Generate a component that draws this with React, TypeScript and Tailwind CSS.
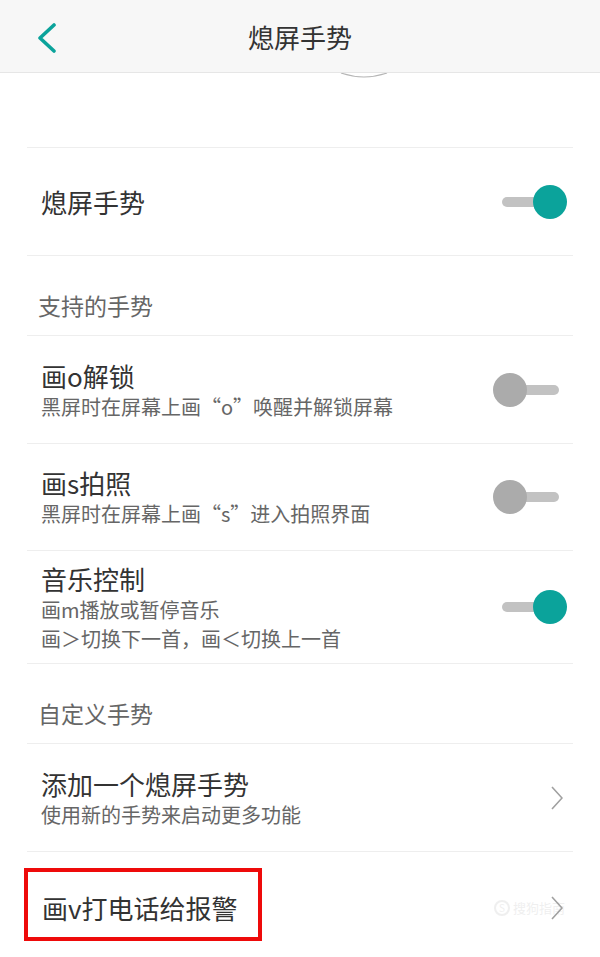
import React from 'react';

const font = { fontFamily: '"Noto Sans CJK SC", "Noto Sans", sans-serif' };

function Toggle({ on }: { on: boolean }) {
  return (
    <div className="relative w-[74px] h-[34px] shrink-0">
      <div className="absolute left-[9px] right-[8px] top-[12px] h-[10px] rounded-full bg-[#c2c2c2]" />
      <div
        className={
          on
            ? 'absolute right-0 top-0 w-[34px] h-[34px] rounded-full bg-[#0ba39b]'
            : 'absolute left-0 top-0 w-[34px] h-[34px] rounded-full bg-[#ababab]'
        }
      />
    </div>
  );
}

function Chevron() {
  return (
    <svg width="12" height="24" viewBox="0 0 12 24" className="shrink-0">
      <path d="M1 1 L11 12 L1 23" fill="none" stroke="#a0a0a0" strokeWidth="1.6" />
    </svg>
  );
}

function Row({
  title,
  subs = [],
  right,
  h,
}: {
  title: string;
  subs?: string[];
  right: React.ReactNode;
  h: string;
}) {
  return (
    <div className={`flex items-center justify-between border-b border-[#eeeeee] pl-[14px] pr-[6px] ${h}`}>
      <div className="flex flex-col">
        <div className="text-[26px] leading-[33px] text-[#333333]">{title}</div>
        {subs.map(s => (
          <div key={s} className="text-[20px] leading-[29px] text-[#666666]">{s}</div>
        ))}
      </div>
      {right}
    </div>
  );
}

function SectionHeader({ text }: { text: string }) {
  return (
    <div className="flex items-end h-[80px] pb-[15px] pl-[11px] border-b border-[#eeeeee] text-[23px] leading-[30px] text-[#666666]">
      {text}
    </div>
  );
}

export default function App() {
  return (
    <div className="w-[600px] h-[957px] bg-white overflow-hidden" style={font}>
      <div className="relative flex items-center justify-center h-[73px] bg-[#f7f7f7] border-b border-[#e6e6e6]">
        <svg width="22" height="30" viewBox="0 0 22 30" className="absolute left-[36px] top-[23px]">
          <path d="M18 2 L4 15 L18 28" fill="none" stroke="#0ba39b" strokeWidth="3.6" strokeLinecap="round" strokeLinejoin="round" />
        </svg>
        <div className="text-[26px] text-[#333333]">熄屏手势</div>
      </div>

      <div className="mx-[27px]">
        <div className="h-[75px] border-b border-[#eeeeee] pl-[313px]">
          <svg width="48" height="6" viewBox="0 0 48 6">
            <path d="M1 0 Q24 8 47 0" fill="none" stroke="#b5b5b5" strokeWidth="1.2" />
          </svg>
        </div>

        <Row title="熄屏手势" h="h-[108px]" right={<Toggle on />} />
        <SectionHeader text="支持的手势" />
        <Row
          title="画o解锁"
          subs={['黑屏时在屏幕上画“o”唤醒并解锁屏幕']}
          h="h-[108px]"
          right={<Toggle on={false} />}
        />
        <Row
          title="画s拍照"
          subs={['黑屏时在屏幕上画“s”进入拍照界面']}
          h="h-[107px]"
          right={<Toggle on={false} />}
        />
        <Row
          title="音乐控制"
          subs={['画m播放或暂停音乐', '画＞切换下一首，画＜切换上一首']}
          h="h-[113px]"
          right={<Toggle on />}
        />
        <SectionHeader text="自定义手势" />
        <Row
          title="添加一个熄屏手势"
          subs={['使用新的手势来启动更多功能']}
          h="h-[108px]"
          right={<div className="pr-[4px]"><Chevron /></div>}
        />

        <div className="relative flex items-center justify-between h-[106px] pt-[6px] pl-[15px] pr-[10px]">
          <div className="text-[26px] leading-[34px] text-[#333333]">画v打电话给报警</div>
          <div className="flex items-center">
            <div className="flex items-center gap-[3px] opacity-15 -mr-[14px]">
              <div className="w-[16px] h-[16px] rounded-full border-2 border-[#999999] text-[10px] leading-[12px] text-center text-[#999999]">S</div>
              <div className="text-[13px] text-[#999999]">搜狗指南</div>
            </div>
            <Chevron />
          </div>
          <div className="absolute left-[-3px] top-[16px] w-[238px] h-[73px] border-4 border-[#ee0a0a]" />
        </div>
      </div>
    </div>
  );
}
